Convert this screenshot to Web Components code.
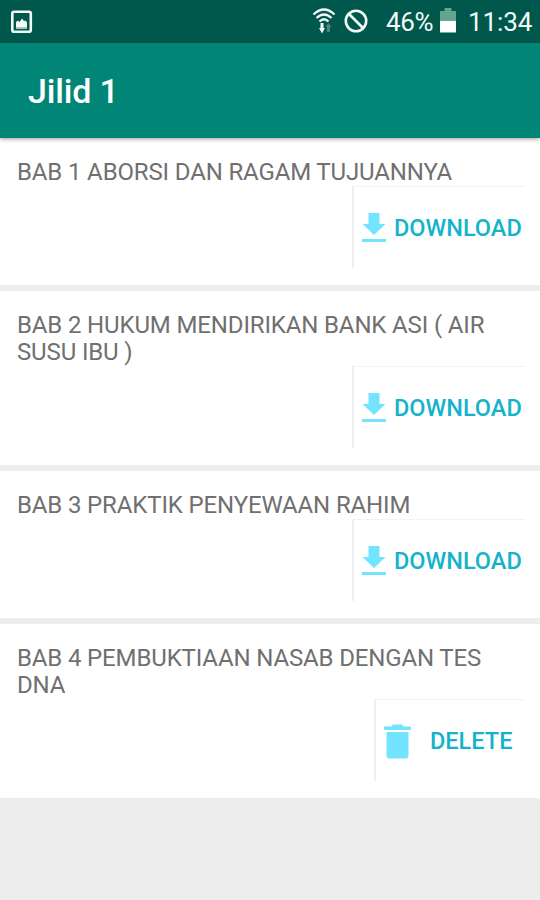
<!DOCTYPE html>
<html lang="id">
<head>
<meta charset="utf-8">
<title>Jilid 1</title>
<style>
body {
    margin: 0;
    background: #ededed;
    font-family: Roboto, "Liberation Sans", sans-serif;
}
</style>
</head>
<body>
<jilid-app></jilid-app>

<script>
class BaseElement extends HTMLElement {
    constructor(html) {
        super()
        const template = document.createElement('template')
        template.innerHTML = html
        this.attachShadow({mode: 'open'}).appendChild(template.content.cloneNode(true))
    }
}

//#region Status bar
class StatusBar extends BaseElement {
    constructor() {
        super(`
<style>
:host {
    display: flex;
    align-items: center;
    box-sizing: border-box;
    height: 43px;
    padding: 1px 7px 0 10px;
    background: #00574b;
    color: #f3faf8;
    font-size: 26px;
    line-height: 40px;
    white-space: nowrap;
}
svg { display: block; flex: none; }
.space { flex: 1; }
.wifi { margin: 0 8px 3px 0; }
.block { margin: 0 18px 2px 0; }
.battery { margin: 0 12px 4px 6px; }
.percent { width: 48px; letter-spacing: -0.3px; }
.time { width: 65px; letter-spacing: -0.1px; }
</style>
<svg width="23" height="24" viewBox="0 0 23 24">
    <rect x="2.300" y="1.800" width="18.500" height="20" rx="1.800" fill="none" stroke="#f3faf8" stroke-width="2.600"/>
    <path d="M6 17v-5l2-1.500 1.500 1.500 2.500-3.500 2 2.500 1.500-.5 1.500 2v4.500z" fill="#f3faf8"/>
    <path d="M6 17h11v2H6z" fill="#a9c4be"/>
</svg>
<span class="space"></span>
<svg class="wifi" width="24" height="26" viewBox="0 0 24 26">
    <g fill="none" stroke="#f3faf8" stroke-width="2.200">
        <path d="M1.500 6.500Q12-3.500 22.500 6.500"/>
        <path d="M4.500 10Q12 3 19.500 10"/>
        <path d="M7.500 13.500Q12 9 16.500 13.500"/>
    </g>
    <path d="M8.500 15h3v5h1.500L10 25.500 7 20h1.500z" fill="#f3faf8"/>
    <path d="M15 24v-5h-1.500l3-4 3 4H18v5z" fill="#f3faf8" opacity=".3"/>
</svg>
<svg class="block" width="24" height="24" viewBox="0 0 24 24">
    <circle cx="12" cy="12" r="10.200" fill="none" stroke="#f3faf8" stroke-width="2.600"/>
    <path d="M5 5l14 14" stroke="#f3faf8" stroke-width="2.600"/>
</svg>
<span class="percent">46%</span>
<svg class="battery" width="16" height="25" viewBox="0 0 16 25">
    <path d="M0 3h4.500V0h7v3H16v10H0z" fill="#65a393"/>
    <path d="M0 13h16v11.500H0z" fill="#fff"/>
</svg>
<span class="time">11:34</span>
`)
    }
}
customElements.define('status-bar', StatusBar)
//#endregion

//#region App bar
class AppBar extends BaseElement {
    constructor() {
        super(`
<style>
:host {
    display: flex;
    align-items: center;
    position: relative;
    box-sizing: border-box;
    height: 95px;
    padding: 1px 28px 0;
    background: #008577;
    box-shadow: 0 1px 4px rgba(60, 30, 30, .45);
    color: #fff;
    font-size: 34px;
    font-weight: 500;
    letter-spacing: -0.15px;
}
</style>
<slot></slot>
`)
    }
}
customElements.define('app-bar', AppBar)
//#endregion

//#region Action button
const icons = {
    download: `<svg width="24" height="30" viewBox="0 0 24 30">
    <path d="M6.500 0h11v11H23.500L12 22 .5 11h6zM0 26h24v3H0z"/></svg>`,
    delete: `<svg width="27" height="35" viewBox="0 0 27 35">
    <path d="M0 2.500h7.500L9 .5h9l1.500 2H27v3.500H0zM2.500 8h22v23.500a3 3 0 0 1-3 3h-16a3 3 0 0 1-3-3z"/></svg>`
}

class ActionButton extends BaseElement {
    constructor() {
        super(`
<style>
:host {
    display: block;
    width: 173px;
    color: #15b3cb;
}
:host([icon="delete"]) { width: 151px; }
button {
    display: flex;
    align-items: center;
    box-sizing: border-box;
    width: 100%;
    height: 82px;
    padding: 0 0 0 8px;
    border: 0 solid #eee;
    border-width: 1px 0 0 2px;
    border-top-color: #f3f3f3;
    background: none;
    color: inherit;
    font: 500 23.5px/27px Roboto, sans-serif;
    white-space: nowrap;
}
svg {
    display: block;
    fill: #72e4ff;
}
.label { margin: 2px 0 0 8px; }
:host([icon="delete"]) .label { margin-left: 19px; }
:host([icon="delete"]) svg { margin-top: 1px; }
</style>
<button><span class="icon"></span><span class="label"><slot></slot></span></button>
`)
    }

    connectedCallback() {
        this.shadowRoot.querySelector('.icon').innerHTML = icons[this.getAttribute('icon')]
    }
}
customElements.define('action-button', ActionButton)
//#endregion

//#region Chapter row
class ChapterRow extends BaseElement {
    constructor() {
        super(`
<style>
:host {
    display: flex;
    flex-direction: column;
    padding: 21px 15px 17px 17px;
    background: #fff;
    color: #707070;
    font-size: 24px;
    line-height: 27px;
    letter-spacing: -0.14px;
}
.title { padding-right: 20px; }
.action { align-self: flex-end; }
</style>
<div class="title"><slot></slot></div>
<div class="action"><slot name="action"></slot></div>
`)
    }
}
customElements.define('chapter-row', ChapterRow)
//#endregion

class JilidApp extends BaseElement {
    constructor() {
        super(`
<style>
:host { display: block; }
main {
    display: flex;
    flex-direction: column;
    gap: 6px;
}
</style>
<status-bar></status-bar>
<app-bar>Jilid 1</app-bar>
<main>
    <chapter-row>BAB 1 ABORSI DAN RAGAM TUJUANNYA<action-button slot="action" icon="download">DOWNLOAD</action-button></chapter-row>
    <chapter-row>BAB 2 HUKUM MENDIRIKAN BANK ASI ( AIR SUSU IBU )<action-button slot="action" icon="download">DOWNLOAD</action-button></chapter-row>
    <chapter-row>BAB 3 PRAKTIK PENYEWAAN RAHIM<action-button slot="action" icon="download">DOWNLOAD</action-button></chapter-row>
    <chapter-row>BAB 4 PEMBUKTIAAN NASAB DENGAN TES DNA<action-button slot="action" icon="delete">DELETE</action-button></chapter-row>
</main>
`)
    }
}
customElements.define('jilid-app', JilidApp)
</script>
</body>
</html>
